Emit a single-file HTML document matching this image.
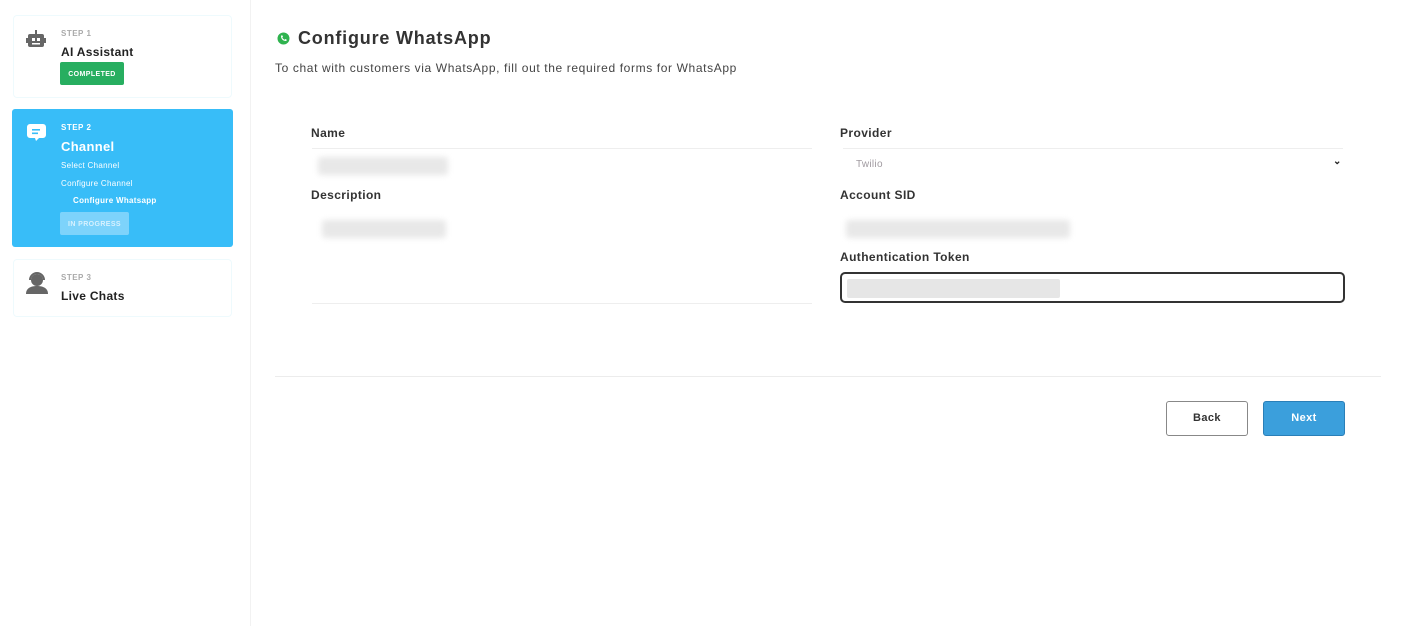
<!DOCTYPE html>
<html><head><style>
body{margin:0;width:1404px;height:626px;background:#fff;font-family:"Liberation Sans",sans-serif;position:relative;overflow:hidden;color:#222}
.a{position:absolute}
.card{position:absolute;left:13px;width:219px;border:1px solid #eefafd;border-radius:4px;box-sizing:border-box}
.sm{font-size:8px;font-weight:bold;color:#aaa;letter-spacing:0.5px}
.t{font-size:12px;font-weight:bold;letter-spacing:0.3px}
.lbl{position:absolute;font-size:12px;font-weight:bold;color:#333;letter-spacing:0.4px}
.blur{position:absolute;background:#e8e8e8;filter:blur(3px);border-radius:3px}
.line{position:absolute;height:1px;background:#eee}
</style></head><body>
<div class="a" style="left:250px;top:0;width:1px;height:626px;background:#f2f2f2"></div>

<div class="card" style="top:15px;height:83px"></div>
<svg class="a" style="left:26px;top:30px" width="20" height="20" viewBox="0 0 20 20"><rect x="9" y="0" width="2" height="4" fill="#666"/><rect x="2" y="4" width="16" height="13" rx="2" fill="#666"/><rect x="0" y="8" width="2" height="5" fill="#666"/><rect x="18" y="8" width="2" height="5" fill="#666"/><rect x="6" y="8" width="3" height="3" fill="#fff"/><rect x="11" y="8" width="3" height="3" fill="#fff"/><rect x="6" y="13" width="8" height="1.5" fill="#fff"/></svg>
<div class="a sm" style="left:61px;top:29px">STEP 1</div>
<div class="a t" style="left:61px;top:45px">AI Assistant</div>
<div class="a" style="left:60px;top:62px;width:64px;height:23px;background:#27ae60;border-radius:2px;color:#fff;font-size:7px;font-weight:bold;text-align:center;line-height:25px;letter-spacing:0.4px">COMPLETED</div>

<div class="a" style="left:12px;top:109px;width:221px;height:138px;background:#38bdf8;border-radius:3px"></div>
<svg class="a" style="left:26px;top:123px" width="22" height="22" viewBox="0 0 22 22"><path d="M4 1h13a3 3 0 0 1 3 3v8a3 3 0 0 1-3 3h-4l-3 3-1-3H4a3 3 0 0 1-3-3V4a3 3 0 0 1 3-3z" fill="#fff"/><rect x="6" y="6" width="8" height="1.6" fill="#38bdf8"/><rect x="6" y="9.5" width="6" height="1.6" fill="#38bdf8"/></svg>
<div class="a" style="left:61px;top:123px;font-size:8px;font-weight:bold;color:#fff;letter-spacing:0.5px">STEP 2</div>
<div class="a" style="left:61px;top:139px;font-size:13px;font-weight:bold;color:#fff;letter-spacing:0.3px">Channel</div>
<div class="a" style="left:61px;top:161px;font-size:8px;color:#fff;letter-spacing:0.3px">Select Channel</div>
<div class="a" style="left:61px;top:179px;font-size:8px;color:#fff;letter-spacing:0.3px">Configure Channel</div>
<div class="a" style="left:73px;top:196px;font-size:8px;font-weight:bold;color:#fff;letter-spacing:0.3px">Configure Whatsapp</div>
<div class="a" style="left:60px;top:212px;width:69px;height:23px;background:#7dd3fb;border-radius:2px;color:#d7f1fe;font-size:7px;font-weight:bold;text-align:center;line-height:25px;letter-spacing:0.4px">IN PROGRESS</div>

<div class="card" style="top:259px;height:58px"></div>
<svg class="a" style="left:25px;top:272px" width="24" height="24" viewBox="0 0 24 24"><circle cx="12" cy="8" r="6" fill="#666"/><path d="M5 8a7 7 0 0 1 14 0" stroke="#666" stroke-width="2" fill="none"/><path d="M1 22c0-6 5-8 11-8s11 2 11 8z" fill="#666"/></svg>
<div class="a sm" style="left:61px;top:273px">STEP 3</div>
<div class="a t" style="left:61px;top:289px">Live Chats</div>

<svg class="a" style="left:277px;top:32px" width="13" height="13" viewBox="0 0 13 13"><circle cx="6.5" cy="6.5" r="6" fill="#2fb34f"/><path d="M4 4c0 3 2 5 5 5l1-1-1.5-1-1 .7c-1-.5-1.7-1.2-2.2-2.2l.7-1L5 3z" fill="#fff"/></svg>
<div class="a" style="left:298px;top:28px;font-size:18px;font-weight:bold;color:#333;letter-spacing:0.8px">Configure WhatsApp</div>
<div class="a" style="left:275px;top:61px;font-size:12px;color:#444;letter-spacing:0.62px">To chat with customers via WhatsApp, fill out the required forms for WhatsApp</div>

<div class="lbl" style="left:311px;top:126px">Name</div>
<div class="line" style="left:312px;top:148px;width:500px"></div>
<div class="blur" style="left:318px;top:157px;width:130px;height:18px"></div>
<div class="lbl" style="left:311px;top:188px">Description</div>
<div class="blur" style="left:322px;top:220px;width:124px;height:18px"></div>
<div class="line" style="left:312px;top:303px;width:500px"></div>

<div class="lbl" style="left:840px;top:126px">Provider</div>
<div class="line" style="left:843px;top:148px;width:500px"></div>
<div class="a" style="left:856px;top:159px;font-size:10px;color:#a09aa0;letter-spacing:0.3px">Twilio</div>
<div class="a" style="left:1333px;top:156px;font-size:10px;font-weight:bold">⌄</div>
<div class="lbl" style="left:840px;top:188px">Account SID</div>
<div class="blur" style="left:846px;top:220px;width:224px;height:18px"></div>
<div class="lbl" style="left:840px;top:250px">Authentication Token</div>
<div class="a" style="left:840px;top:272px;width:505px;height:31px;border:2px solid #333;border-radius:5px;box-sizing:border-box"></div>
<div class="a" style="left:847px;top:279px;width:213px;height:19px;background:#e6e6e6;border-radius:2px"></div>

<div class="line" style="left:275px;top:376px;width:1106px;background:#ececec"></div>
<div class="a" style="left:1166px;top:401px;width:82px;height:35px;border:1px solid #888;border-radius:3px;box-sizing:border-box;font-size:11px;font-weight:bold;color:#333;text-align:center;line-height:33px;letter-spacing:0.4px">Back</div>
<div class="a" style="left:1263px;top:401px;width:82px;height:35px;background:#3b9fdc;border:1px solid #2a7fb8;border-radius:3px;box-sizing:border-box;font-size:11px;font-weight:bold;color:#fff;text-align:center;line-height:33px;letter-spacing:0.4px">Next</div>
</body></html>
